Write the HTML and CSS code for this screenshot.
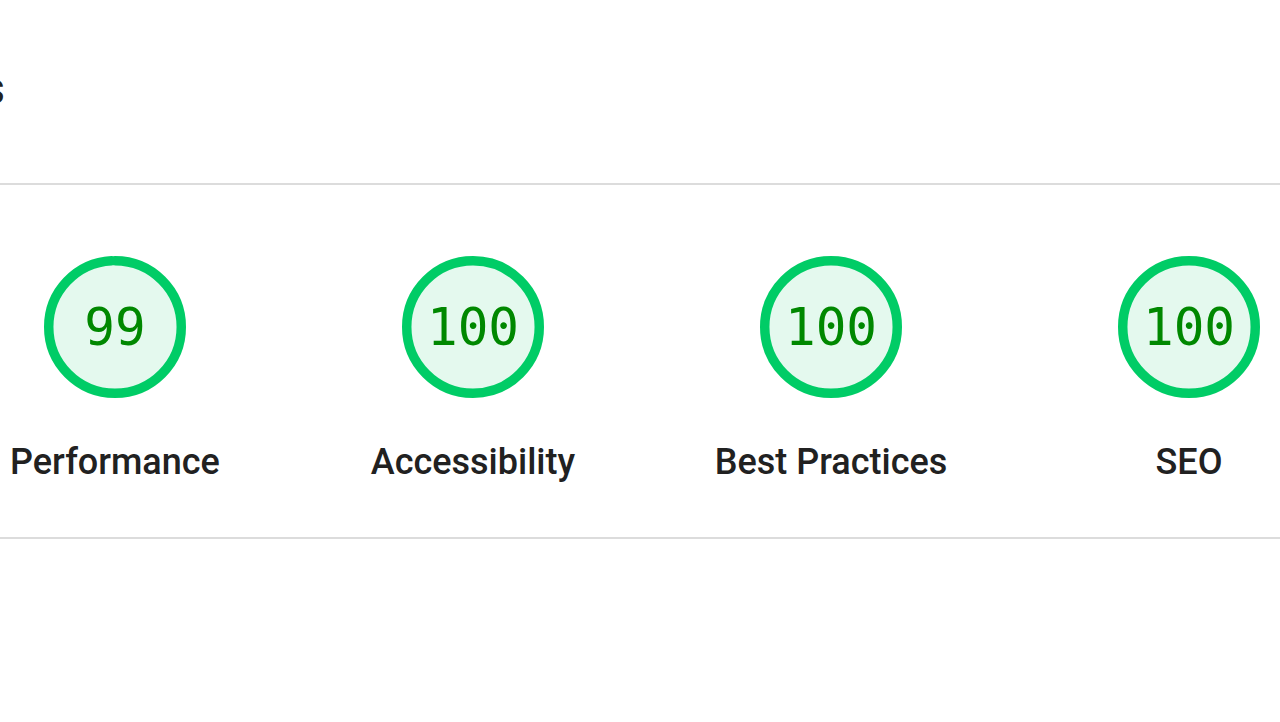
FILE: index.html
```html
<!DOCTYPE html>
<html lang="en">
<head>
<meta charset="UTF-8">
<meta name="viewport" content="width=device-width, initial-scale=1.0">
<title>Lighthouse scores</title>
<link rel="stylesheet" href="styles.css">
</head>
<body>

<div class="header">
    <div class="title-clip">
        <h1 class="title">Scores</h1>
    </div>
</div>

<div class="divider"></div>

<div class="scores">
    <div class="gauge">
        <div class="gauge-ring">
            <svg class="gauge-svg" viewBox="0 0 120 120">
                <circle class="gauge-base" cx="60" cy="60" r="56"></circle>
                <circle class="gauge-arc" cx="60" cy="60" r="56" transform="rotate(-90 60 60)" stroke-dasharray="348.34 351.86"></circle>
            </svg>
            <div class="gauge-value">99</div>
        </div>
        <div class="gauge-label">Performance</div>
    </div>
    <div class="gauge">
        <div class="gauge-ring">
            <svg class="gauge-svg" viewBox="0 0 120 120">
                <circle class="gauge-base" cx="60" cy="60" r="56"></circle>
                <circle class="gauge-arc" cx="60" cy="60" r="56" transform="rotate(-90 60 60)" stroke-dasharray="351.86 351.86"></circle>
            </svg>
            <div class="gauge-value">100</div>
        </div>
        <div class="gauge-label">Accessibility</div>
    </div>
    <div class="gauge">
        <div class="gauge-ring">
            <svg class="gauge-svg" viewBox="0 0 120 120">
                <circle class="gauge-base" cx="60" cy="60" r="56"></circle>
                <circle class="gauge-arc" cx="60" cy="60" r="56" transform="rotate(-90 60 60)" stroke-dasharray="351.86 351.86"></circle>
            </svg>
            <div class="gauge-value">100</div>
        </div>
        <div class="gauge-label">Best Practices</div>
    </div>
    <div class="gauge">
        <div class="gauge-ring">
            <svg class="gauge-svg" viewBox="0 0 120 120">
                <circle class="gauge-base" cx="60" cy="60" r="56"></circle>
                <circle class="gauge-arc" cx="60" cy="60" r="56" transform="rotate(-90 60 60)" stroke-dasharray="351.86 351.86"></circle>
            </svg>
            <div class="gauge-value">100</div>
        </div>
        <div class="gauge-label">SEO</div>
    </div>
</div>

<div class="divider"></div>

</body>
</html>
```

FILE: styles.css
```css
body {
    margin: 0;
    padding: 0;
    background-color: #ffffff;
    color: #212121;
    font-family: Roboto, "Liberation Sans", sans-serif;
    overflow: hidden;
}
.header {
    height: 183px;
}
.title-clip {
    display: flex;
    justify-content: flex-end;
    width: 5px;
    overflow: hidden;
    padding-top: 60px;
}
.title {
    margin: 0;
    font-size: 47px;
    font-weight: 500;
    line-height: 56px;
    white-space: nowrap;
    flex-shrink: 0;
}
.divider {
    height: 2px;
    background-color: #dcdcdc;
}
.scores {
    display: flex;
    margin-left: -64px;
    padding: 71px 0 55px;
}
.gauge {
    width: 358px;
    flex-shrink: 0;
    display: flex;
    flex-direction: column;
    align-items: center;
}
.gauge-ring {
    display: grid;
    width: 142px;
    height: 142px;
}
.gauge-svg,
.gauge-value {
    grid-area: 1 / 1;
}
.gauge-svg {
    width: 142px;
    height: 142px;
}
.gauge-base {
    fill: #00cc66;
    stroke: #00cc66;
    stroke-width: 8;
    opacity: 0.1;
}
.gauge-arc {
    fill: none;
    stroke: #00cc66;
    stroke-width: 8;
    stroke-linecap: round;
}
.gauge-value {
    display: flex;
    align-items: center;
    justify-content: center;
    color: #008800;
    font-family: "DejaVu Sans Mono", "Liberation Mono", monospace;
    font-size: 51px;
}
.gauge-label {
    margin-top: 44px;
    font-size: 36px;
    font-weight: 500;
    line-height: 40px;
    white-space: nowrap;
}
```
